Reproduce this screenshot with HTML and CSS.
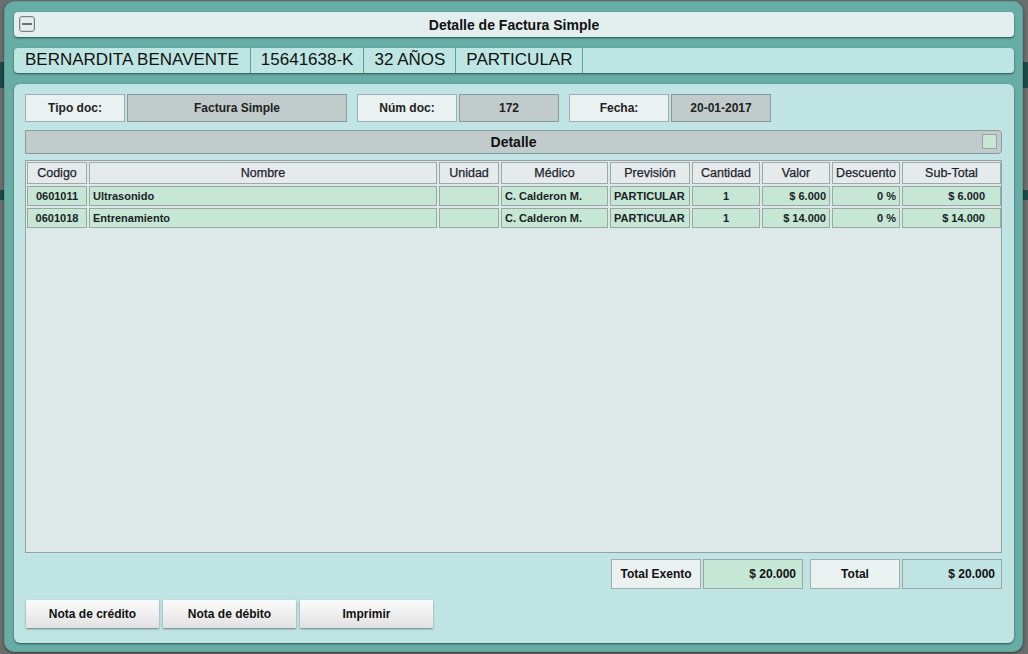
FILE: index.html
```html
<!DOCTYPE html>
<html lang="es">
<head>
<meta charset="utf-8">
<title>Detalle de Factura Simple</title>
<link rel="stylesheet" href="styles.css">
</head>
<body>
<div class="backdrop">
  <div class="modal">
    <div class="titlebar">
      <span class="minbtn"><span class="minline"></span></span>
      <span class="title">Detalle de Factura Simple</span>
    </div>
    <div class="patient">
      <div class="pcell first">BERNARDITA BENAVENTE</div>
      <div class="pcell">15641638-K</div>
      <div class="pcell">32 AÑOS</div>
      <div class="pcell">PARTICULAR</div>
    </div>
    <div class="panel">
      <div class="docrow">
        <div class="lbl">Tipo doc:</div>
        <div class="val wide">Factura Simple</div>
        <div class="lbl sp">Núm doc:</div>
        <div class="val">172</div>
        <div class="lbl sp">Fecha:</div>
        <div class="val">20-01-2017</div>
      </div>
      <div class="dethead">
        <span class="dettitle">Detalle</span>
        <span class="chk"></span>
      </div>
      <div class="tablebox">
        <table class="grid">
          <colgroup>
            <col class="c-cod"><col class="c-nom"><col class="c-uni"><col class="c-med"><col class="c-pre"><col class="c-can"><col class="c-val"><col class="c-des"><col>
          </colgroup>
          <thead>
            <tr>
              <th>Codigo</th><th>Nombre</th><th>Unidad</th><th>Médico</th><th>Previsión</th><th>Cantidad</th><th>Valor</th><th>Descuento</th><th>Sub-Total</th>
            </tr>
          </thead>
          <tbody>
            <tr>
              <td class="ctr">0601011</td><td>Ultrasonido</td><td></td><td>C. Calderon M.</td><td>PARTICULAR</td><td class="ctr">1</td><td class="rt">$ 6.000</td><td class="rt">0 %</td><td class="rt sub">$ 6.000</td>
            </tr>
            <tr>
              <td class="ctr">0601018</td><td>Entrenamiento</td><td></td><td>C. Calderon M.</td><td>PARTICULAR</td><td class="ctr">1</td><td class="rt">$ 14.000</td><td class="rt">0 %</td><td class="rt sub">$ 14.000</td>
            </tr>
          </tbody>
        </table>
      </div>
      <div class="totals">
        <div class="tlbl">Total Exento</div>
        <div class="tval green">$ 20.000</div>
        <div class="tlbl sp2">Total</div>
        <div class="tval">$ 20.000</div>
      </div>
      <div class="buttons">
        <button class="btn">Nota de crédito</button>
        <button class="btn">Nota de débito</button>
        <button class="btn">Imprimir</button>
      </div>
    </div>
  </div>
</div>
</body>
</html>
```

FILE: styles.css
```css
* { box-sizing: border-box; }
html, body { margin: 0; padding: 0; }
body {
  font-family: "Liberation Sans", Arial, sans-serif;
  color: #1a1a1a;
  background:
    linear-gradient(#1d4a45, #1d4a45) 0 62px / 100% 26px no-repeat,
    linear-gradient(#1d4a45, #1d4a45) 0 190px / 100% 10px no-repeat,
    #6c6e6d;
  width: 1028px;
  height: 654px;
  overflow: hidden;
}
.backdrop { padding: 1px 5px 0 4px; }
.modal {
  height: 651px;
  background: #68aca6;
  border-radius: 10px;
  border: 1px solid #5c9d97;
  box-shadow: 0 1px 3px rgba(0,0,0,.5);
  padding: 10px 8px 0 9px;
  display: flex;
  flex-direction: column;
}
.titlebar {
  height: 25px;
  background: #e2efee;
  border-radius: 4px;
  box-shadow: 0 1px 2px rgba(20,60,56,.8);
  display: flex;
  align-items: center;
  position: relative;
}
.minbtn {
  position: absolute;
  left: 5px;
  top: 4px;
  width: 16px;
  height: 16px;
  border: 1px solid #7b8383;
  border-radius: 3px;
  background: #e5eded;
  box-shadow: inset 0 0 0 1px #cdd7d7;
  display: flex;
  align-items: center;
  justify-content: center;
}
.minline { width: 10px; height: 2px; background: #6a6f6f; }
.title {
  flex: 1;
  text-align: center;
  font-weight: bold;
  font-size: 14px;
  color: #111;
}
.patient {
  margin-top: 11px;
  height: 25px;
  background: #bde5e1;
  border-radius: 4px;
  box-shadow: 0 1px 2px rgba(20,60,56,.8);
  display: flex;
}
.pcell {
  font-size: 17px;
  line-height: 24px;
  padding: 0 10px;
  border-right: 1px solid #5e9f99;
  color: #111;
}
.pcell.first { padding: 0 11px; }
.panel {
  margin-top: 11px;
  height: 559px;
  background: #c0e4e3;
  border-radius: 6px;
  box-shadow: 0 1px 2px rgba(20,60,56,.8);
  padding: 10px 11px 0 11px;
}
.docrow { display: flex; height: 28px; }
.lbl, .val {
  height: 28px;
  line-height: 26px;
  font-size: 12px;
  font-weight: bold;
  text-align: center;
  color: #222;
}
.lbl {
  width: 100px;
  background: #e9f1f1;
  border: 1px solid #a3aeae;
}
.lbl.sp { margin-left: 10px; }
.val {
  width: 100px;
  margin-left: 2px;
  background: #c1cbcc;
  border: 1px solid #8e9a9a;
}
.val.wide { width: 220px; }
.dethead {
  margin-top: 8px;
  height: 24px;
  width: 977px;
  background: #c1cbcc;
  border: 1px solid #8e9a9a;
  border-radius: 0 4px 4px 0;
  position: relative;
  text-align: center;
}
.dettitle { font-size: 14px; font-weight: bold; line-height: 22px; color: #111; }
.chk {
  position: absolute;
  right: 4px;
  top: 3px;
  width: 15px;
  height: 15px;
  background: #c6e7d4;
  border: 1px solid #98a5a5;
}
.tablebox {
  margin-top: 6px;
  width: 977px;
  height: 393px;
  background: #dde8e8;
  border: 1px solid #9a9f9f;
}
.grid {
  table-layout: fixed;
  border-collapse: separate;
  border-spacing: 2px;
  margin-top: -1px;
  margin-left: -1px;
  width: 978px;
}
.c-cod { width: 60px; }
.c-nom { width: 348px; }
.c-uni { width: 60px; }
.c-med { width: 107px; }
.c-pre { width: 80px; }
.c-can { width: 68px; }
.c-val { width: 68px; }
.c-des { width: 68px; }
.grid th {
  height: 22px;
  padding: 0;
  font-size: 12.5px;
  font-weight: normal;
  -webkit-text-stroke: 0.25px #1f2430;
  background: #e5eaea;
  border: 1px solid #a2a8a8;
  color: #1f2430;
  text-align: center;
}
.grid td {
  height: 20px;
  padding: 0 3px;
  font-size: 11px;
  font-weight: bold;
  background: #c6e6d6;
  border: 1px solid #9aa7a2;
  color: #1a1f24;
  white-space: nowrap;
}
.grid td.ctr { text-align: center; }
.grid td.rt { text-align: right; }
.grid td.sub { padding-right: 15px; }
.totals {
  margin-top: 6px;
  width: 977px;
  display: flex;
  justify-content: flex-end;
}
.tlbl, .tval {
  height: 30px;
  line-height: 28px;
  font-size: 12px;
  font-weight: bold;
  color: #111;
}
.tlbl {
  width: 90px;
  text-align: center;
  background: #e9f1f1;
  border: 1px solid #a3aeae;
}
.tlbl.sp2 { margin-left: 7px; }
.tval {
  width: 100px;
  margin-left: 2px;
  text-align: right;
  padding-right: 6px;
  background: #c0e4e3;
  border: 1px solid #9aa7a6;
}
.tval.green { background: #c6e6d6; }
.buttons {
  margin-top: 11px;
  display: flex;
  gap: 4px;
  padding-left: 1px;
}
.btn {
  width: 133px;
  height: 28px;
  font-family: "Liberation Sans", Arial, sans-serif;
  font-size: 12px;
  font-weight: bold;
  color: #111;
  background: linear-gradient(#fbfbfb, #e2e2e2);
  border: none;
  border-radius: 1px;
  box-shadow: 0 1px 2px rgba(0,0,0,.45);
  padding: 0;
}
```
